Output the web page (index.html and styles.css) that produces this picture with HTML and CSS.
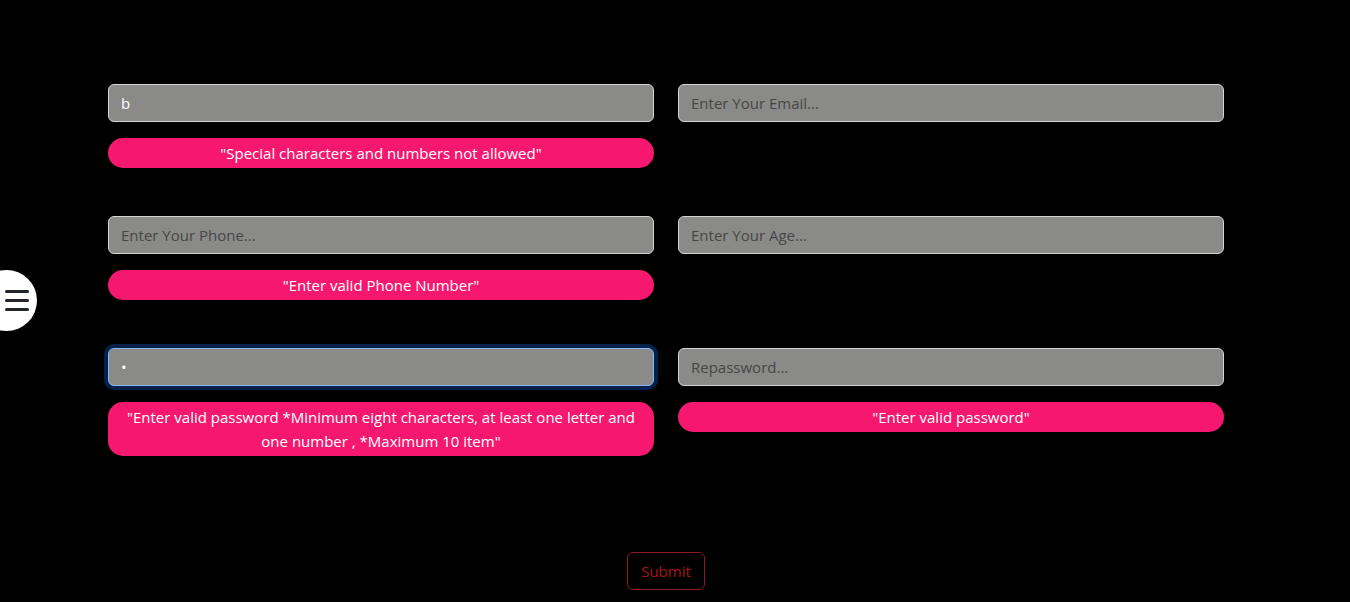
FILE: index.html
```html
<!DOCTYPE html>
<html lang="en">
<head>
<meta charset="utf-8">
<title>Form</title>
<link rel="stylesheet" href="styles.css">
</head>
<body>
<button class="menu-toggle" type="button" aria-label="Menu">
  <span class="bar"></span><span class="bar"></span><span class="bar"></span>
</button>
<form class="form">
  <div class="grid">
    <div class="field">
      <input class="input" type="text" value="b" placeholder="Enter Your Name...">
      <div class="error">"Special characters and numbers not allowed"</div>
    </div>
    <div class="field">
      <input class="input" type="email" placeholder="Enter Your Email...">
    </div>
    <div class="field">
      <input class="input" type="tel" placeholder="Enter Your Phone...">
      <div class="error">"Enter valid Phone Number"</div>
    </div>
    <div class="field">
      <input class="input" type="number" placeholder="Enter Your Age...">
    </div>
    <div class="field">
      <input class="input focused" type="password" value="a" placeholder="Password...">
      <div class="error">"Enter valid password *Minimum eight characters, at least one letter and one number , *Maximum 10 item"</div>
    </div>
    <div class="field">
      <input class="input" type="password" placeholder="Repassword...">
      <div class="error">"Enter valid password"</div>
    </div>
  </div>
  <div class="actions">
    <button class="submit" type="button">Submit</button>
  </div>
</form>
</body>
</html>
```

FILE: styles.css
```css
html, body {
  margin: 0;
  padding: 0;
  background: #000;
}
html {
  overflow-y: scroll;
}
::-webkit-scrollbar {
  width: 15px;
  background: #f0f0f0;
}
::-webkit-scrollbar-track {
  background: #f0f0f0;
}
::-webkit-scrollbar-thumb {
  background: #c1c1c1;
  border-left: 2px solid #f0f0f0;
  border-right: 1px solid #f0f0f0;
}
::-webkit-scrollbar-button:single-button {
  display: block;
  height: 17px;
  background-color: #f0f0f0;
}
::-webkit-scrollbar-button:single-button:vertical:decrement {
  background-image:
    linear-gradient(to top left, #a3a3a3 50%, transparent 50%),
    linear-gradient(to top right, #a3a3a3 50%, transparent 50%);
  background-size: 4px 4px, 4px 4px;
  background-position: 3px 6px, 7px 6px;
  background-repeat: no-repeat;
}
::-webkit-scrollbar-button:single-button:vertical:increment {
  background-image:
    linear-gradient(to bottom left, #505050 50%, transparent 50%),
    linear-gradient(to bottom right, #505050 50%, transparent 50%);
  background-size: 4px 4px, 4px 4px;
  background-position: 3px 7px, 7px 7px;
  background-repeat: no-repeat;
}
body {
  font-family: "Open Sans", "Noto Sans", sans-serif;
  font-size: 15px;
  color: #fff;
  min-height: 723px;
}
.menu-toggle {
  position: fixed;
  left: -24px;
  top: 270px;
  width: 61px;
  height: 61px;
  border-radius: 50%;
  background: #fff;
  border: 0;
  padding: 0 0 0 29px;
  display: flex;
  flex-direction: column;
  justify-content: center;
  gap: 6px;
}
.menu-toggle .bar {
  display: block;
  width: 24px;
  height: 3px;
  border-radius: 2px;
  background: #212529;
}
.form {
  padding: 84px 0 0 108px;
  width: 1116px;
}
.grid {
  display: grid;
  grid-template-columns: 546px 546px;
  column-gap: 24px;
  row-gap: 48px;
  align-items: start;
}
.field {
  display: flex;
  flex-direction: column;
  gap: 16px;
  min-height: 84px;
}
.input {
  box-sizing: border-box;
  width: 100%;
  height: 38px;
  padding: 6px 12px;
  font-family: inherit;
  font-size: 15px;
  color: #fff;
  background: #8a8a88;
  border: 1px solid #d4d4d4;
  border-radius: 6px;
  outline: none;
}
.input::placeholder {
  color: #474747;
}
.input.focused {
  border-color: #86b7fe;
  box-shadow: 0 0 0 4px #03204a;
}
.error {
  box-sizing: border-box;
  background: #f5186e;
  color: #fff;
  border-radius: 15px;
  text-align: center;
  line-height: 24px;
  padding: 3px 12px;
}
.actions {
  display: flex;
  justify-content: center;
  margin-top: 96px;
}
.submit {
  font-family: inherit;
  font-size: 15px;
  color: #a8151f;
  background: transparent;
  border: 1px solid #8e1a22;
  border-radius: 6px;
  height: 38px;
  padding: 0 13px;
}
```
